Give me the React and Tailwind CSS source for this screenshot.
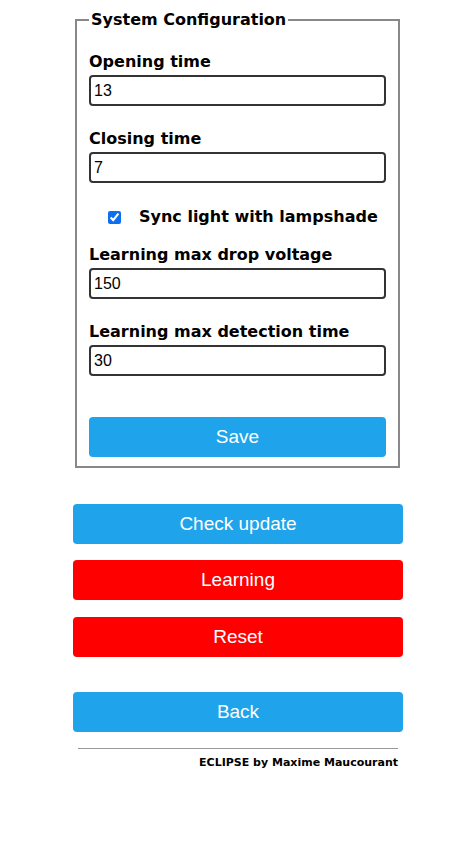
import { useState } from "react";

const labelFont = { fontFamily: '"DejaVu Sans", Verdana, sans-serif' };

const Field = ({ label, value, onChange }) => (
	<div className="flex flex-col">
		<label className="text-[16px] leading-[20px] font-bold text-black mb-[3px]">{label}</label>
		<input
			type="text"
			value={value}
			onChange={(e) => onChange(e.target.value)}
			className="h-[31px] w-full rounded-[4px] border-2 border-[#333] px-[3px] text-[16px] text-black font-['Liberation_Sans',Arial,sans-serif] outline-none"
		/>
	</div>
);

const Button = ({ children, red }) => (
	<button
		type="button"
		className={
			red
				? "h-[40px] w-full rounded-[4px] bg-[#ff0000] text-white text-[19px] font-['Liberation_Sans',Arial,sans-serif]"
				: "h-[40px] w-full rounded-[4px] bg-[#1fa3ea] text-white text-[19px] font-['Liberation_Sans',Arial,sans-serif]"
		}
	>
		{children}
	</button>
);

export default function App() {
	const [opening, setOpening] = useState("13");
	const [closing, setClosing] = useState("7");
	const [sync, setSync] = useState(true);
	const [drop, setDrop] = useState("150");
	const [detect, setDetect] = useState("30");

	return (
		<div className="w-[463px] min-h-[849px] bg-white pt-[10px]" style={labelFont}>
			{/* settings form */}
			<fieldset className="ml-[75px] w-[325px] border-2 border-[#888] px-[12px] pb-[9px]">
				<legend className="px-[2px] text-[16px] leading-[19px] font-bold text-black">
					System Configuration
				</legend>

				<div className="mt-[23px] flex flex-col gap-[23px]">
					<Field label="Opening time" value={opening} onChange={setOpening} />
					<Field label="Closing time" value={closing} onChange={setClosing} />
				</div>

				<label className="mt-[24px] flex h-[20px] items-center pl-[19px] gap-[18px]">
					<input
						type="checkbox"
						checked={sync}
						onChange={(e) => setSync(e.target.checked)}
						className="h-[13px] w-[13px] accent-[#0b6ff0]"
					/>
					<span className="text-[16px] font-bold text-black">Sync light with lampshade</span>
				</label>

				<div className="mt-[18px] flex flex-col gap-[23px]">
					<Field label="Learning max drop voltage" value={drop} onChange={setDrop} />
					<Field label="Learning max detection time" value={detect} onChange={setDetect} />
				</div>

				<div className="mt-[41px]">
					<Button>Save</Button>
				</div>
			</fieldset>

			{/* actions */}
			<div className="ml-[73px] mt-[36px] w-[330px] flex flex-col">
				<Button>Check update</Button>
				<div className="mt-[16px]">
					<Button red>Learning</Button>
				</div>
				<div className="mt-[17px]">
					<Button red>Reset</Button>
				</div>
				<div className="mt-[35px]">
					<Button>Back</Button>
				</div>
				<div className="mx-[5px] mt-[16px] border-t border-[#999]" />
				<p className="mr-[5px] mt-[7px] text-right text-[11px] leading-[14px] font-bold text-black">
					ECLIPSE by Maxime Maucourant
				</p>
			</div>
		</div>
	);
}
